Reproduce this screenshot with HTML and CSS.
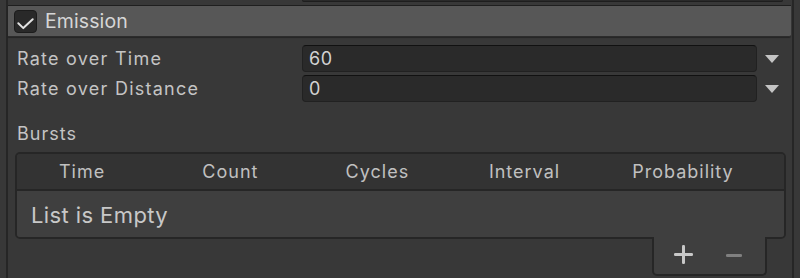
FILE: index.html
```html
<!DOCTYPE html>
<html>
<head>
<meta charset="utf-8">
<link rel="stylesheet" href="styles.css">
</head>
<body>
<div class="panel">
  <div class="top-strip"><div class="top-field"></div></div>
  <div class="module-header">
    <div class="checkbox">
      <svg width="23" height="23" viewBox="0 0 23 23"><path d="M4.3 13.3 L9.3 18.1 L18.7 9.2" fill="none" stroke="#e2e2e2" stroke-width="2" stroke-linecap="round" stroke-linejoin="round"/></svg>
    </div>
    <span class="module-title">Emission</span>
  </div>
  <div class="rows">
    <div class="row">
      <span class="label">Rate over Time</span>
      <div class="field">60</div>
      <div class="dropdown"><span class="tri"></span></div>
    </div>
    <div class="row">
      <span class="label">Rate over Distance</span>
      <div class="field">0</div>
      <div class="dropdown"><span class="tri"></span></div>
    </div>
  </div>
  <div class="section-label">Bursts</div>
  <div class="list">
    <div class="list-head">
      <span>Time</span><span>Count</span><span>Cycles</span><span>Interval</span><span>Probability</span>
    </div>
    <div class="list-body">List is Empty</div>
  </div>
  <div class="footer-wrap">
    <div class="footer">
      <svg class="plus" width="19" height="19" viewBox="0 0 19 19"><rect x="0" y="8" width="19" height="3" rx="1.2" fill="#c8c8c8"/><rect x="8" y="0" width="3" height="19" rx="1.2" fill="#c8c8c8"/></svg>
      <svg class="minus" width="16" height="3" viewBox="0 0 16 3"><rect x="0" y="0" width="16" height="3" rx="1.3" fill="#808080"/></svg>
    </div>
  </div>
</div>
</body>
</html>
```

FILE: styles.css
```css
html, body {
  margin: 0;
  padding: 0;
  background: #383838;
  width: 800px;
  height: 278px;
  overflow: hidden;
  font-family: Inter, "Noto Sans", sans-serif;
  color: #c4c4c4;
}

.panel {
  margin: 0 6px;
  border-left: 2px solid #262626;
  border-right: 2px solid #262626;
  height: 278px;
  box-sizing: border-box;
}

.top-strip {
  height: 3px;
  padding-left: 294px;
  margin-bottom: 2px;
}

.top-field {
  width: 481px;
  height: 2px;
  background: #2a2a2a;
  border-bottom: 1px solid #1e1e1e;
  border-left: 1px solid #212121;
  border-right: 1px solid #212121;
  border-radius: 0 0 4px 4px;
  box-sizing: border-box;
}

.module-header {
  height: 32px;
  margin-right: 1px;
  background: #575757;
  border-top: 1px solid #1f1f1f;
  border-bottom: 1px solid #2c2c2c;
  box-shadow: 0 1px 1px rgba(0, 0, 0, 0.35);
  border-radius: 0 0 2px 0;
  box-sizing: border-box;
  display: flex;
  align-items: center;
  padding-left: 6px;
}

.checkbox {
  width: 23px;
  height: 23px;
  box-sizing: border-box;
  background: #292929;
  border: 1px solid #1c1c1c;
  border-radius: 4px;
  position: relative;
}

.checkbox svg {
  position: absolute;
  left: -1px;
  top: -1px;
}

.module-title {
  margin-left: 8px;
  font-size: 19.5px;
  color: #d6d6d6;
  line-height: 30px;
  letter-spacing: 0.1px;
}

.rows {
  margin-top: 8px;
  display: flex;
  flex-direction: column;
  gap: 3px;
}

.row {
  display: flex;
  align-items: center;
  height: 27px;
}

.label {
  width: 285px;
  padding-left: 9px;
  font-size: 18px;
  line-height: 27px;
  letter-spacing: 1.25px;
  white-space: nowrap;
}

.field {
  width: 455px;
  height: 27px;
  box-sizing: border-box;
  background: #2a2a2a;
  border: 1px solid #212121;
  border-top-color: #111;
  border-radius: 4px;
  padding-left: 6px;
  font-size: 18px;
  line-height: 25px;
  letter-spacing: 0.6px;
  color: #d2d2d2;
}

.dropdown {
  flex: 1;
  display: flex;
  align-items: center;
  padding-left: 8px;
}

.tri {
  width: 0;
  height: 0;
  border-left: 7px solid transparent;
  border-right: 7px solid transparent;
  border-top: 8px solid #c4c4c4;
}

.section-label {
  margin-top: 18px;
  padding-left: 9px;
  font-size: 18px;
  line-height: 27px;
  letter-spacing: 1px;
}

.list {
  margin: 5px 6px 0 7px;
  border: 2px solid #262626;
  border-radius: 5px;
  overflow: hidden;
}

.list-head {
  height: 35px;
  background: #333333;
  border-bottom: 2px solid #262626;
  display: grid;
  grid-template-columns: repeat(5, 143.3px);
  padding-left: 42px;
  align-items: center;
  font-size: 18px;
  letter-spacing: 1px;
  color: #c0c0c0;
}

.list-body {
  height: 46px;
  box-sizing: border-box;
  padding-top: 2px;
  background: #3f3f3f;
  padding-left: 14px;
  font-size: 22px;
  line-height: 44px;
  letter-spacing: 0.4px;
  color: #c8c8c8;
}

.footer-wrap {
  display: flex;
  justify-content: flex-end;
  margin-right: 25px;
  margin-top: -2px;
}

.footer {
  position: relative;
  width: 115px;
  height: 39px;
  box-sizing: border-box;
  background: #3f3f3f;
  border: 2px solid #262626;
  border-top: none;
  border-radius: 0 0 5px 5px;
  display: flex;
  align-items: center;
  padding-left: 20px;
  padding-bottom: 2px;
}

.minus {
  margin-left: 33px;
  margin-top: 1px;
}
```
